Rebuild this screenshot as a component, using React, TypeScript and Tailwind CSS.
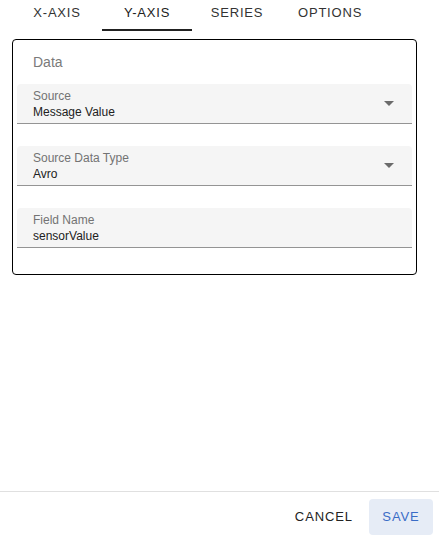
import React from 'react';

const tabs = ['X-AXIS', 'Y-AXIS', 'SERIES', 'OPTIONS'];

type FieldProps = { label: string; value: string; select?: boolean };

const Field = ({ label, value, select }: FieldProps) => (
  <div className="relative h-[40px] rounded-t-[4px] border-b border-[#949494] bg-[#f5f5f5] pl-[16px] pt-[5px]">
    <div className="text-[12px] leading-[14px] text-[#737373]">{label}</div>
    <div className="mt-[2px] text-[12px] leading-[15px] text-[#212121]">{value}</div>
    {select && (
      <svg className="absolute right-[18px] top-[17px]" width="10" height="5" viewBox="0 0 10 5">
        <path d="M0 0h10L5 5z" fill="#6b6b6b" />
      </svg>
    )}
  </div>
);

export default function App() {
  return (
    <div className="flex h-[541px] w-[439px] flex-col bg-white font-['Liberation_Sans',Arial,sans-serif]">
      <div className="flex h-[31px] pl-[12px]">
        {tabs.map((t, i) => (
          <div
            key={t}
            className={`relative flex min-w-[90px] justify-center px-[16px] pt-[5px] text-[13px] leading-[16px] tracking-[0.8px] ${
              i === 1 ? 'text-[#212121]' : 'text-[#333]'
            }`}
          >
            {t}
            {i === 1 && <div className="absolute bottom-0 left-0 h-[2px] w-full bg-[#212121]" />}
          </div>
        ))}
      </div>
      <div className="mx-[12px] mt-[8px] h-[236px] w-[405px] rounded-[4px] border border-black px-[4px]">
        <div className="pl-[16px] pt-[14px] text-[14px] leading-[16px] text-[#7a7a7a]">Data</div>
        <div className="mt-[14px] flex flex-col gap-[22px]">
          <Field label="Source" value="Message Value" select />
          <Field label="Source Data Type" value="Avro" select />
          <Field label="Field Name" value="sensorValue" />
        </div>
      </div>
      <div className="flex-1" />
      <div className="flex h-[50px] items-center justify-end gap-[16px] border-t border-[#e0e0e0] pr-[6px]">
        <button className="text-[13px] tracking-[0.9px] text-[#222]">CANCEL</button>
        <button className="h-[36px] w-[64px] rounded-[4px] bg-[#e6ecf6] text-[13px] tracking-[0.9px] text-[#3a6cc6]">
          SAVE
        </button>
      </div>
    </div>
  );
}
